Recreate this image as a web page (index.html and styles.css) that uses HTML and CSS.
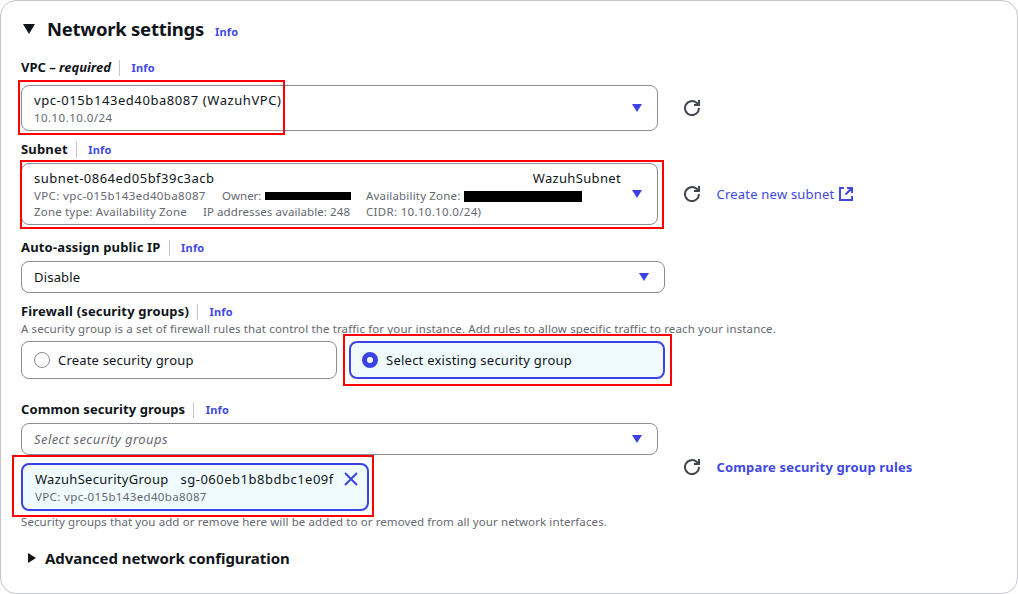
FILE: index.html
```html
<!DOCTYPE html>
<html lang="en">
<head>
<meta charset="utf-8">
<title>Network settings</title>
<link rel="stylesheet" href="styles.css">
</head>
<body>
<main class="panel">
  <header class="panel-header">
    <svg class="caret-title" viewBox="0 0 12 10"><path d="M0 0h12L6 10z"/></svg>
    <h1 class="title">Network settings</h1>
    <a class="info">Info</a>
  </header>

  <section class="field vpc">
    <div class="label"><b class="label-text flat">VPC – <i>required</i></b><a class="info">Info</a></div>
    <div class="row">
      <div class="select vpc-select">
        <div class="lines">
          <div class="value id-long">vpc-015b143ed40ba8087 (WazuhVPC)</div>
          <div class="meta range">10.10.10.0/24</div>
        </div>
        <svg class="caret" viewBox="0 0 10 8"><path d="M0 0h10L5 8z"/></svg>
      </div>
      <svg class="refresh" viewBox="0 0 16 16"><path d="M15 8A7 7 0 1 1 12.800 3L15 5M15 0v5h-5"/></svg>
    </div>
    <div class="mark mark-vpc"></div>
  </section>

  <section class="field subnet">
    <div class="label"><b class="label-text">Subnet</b><a class="info">Info</a></div>
    <div class="row">
      <div class="select subnet-select">
        <div class="lines">
          <div class="value split"><span class="subnet-id">subnet-0864ed05bf39c3acb</span><span class="subnet-name">WazuhSubnet</span></div>
          <div class="meta cols"><span class="vpc-id">VPC: vpc-015b143ed40ba8087</span><span class="owner">Owner:<span class="redact redact-owner"></span></span><span class="zone">Availability Zone:<span class="redact redact-zone"></span></span></div>
          <div class="meta cols"><span class="zone-type">Zone type: Availability Zone</span><span class="ips">IP addresses available: 248</span><span class="cidr">CIDR: 10.10.10.0/24)</span></div>
        </div>
        <svg class="caret" viewBox="0 0 10 8"><path d="M0 0h10L5 8z"/></svg>
      </div>
      <svg class="refresh" viewBox="0 0 16 16"><path d="M15 8A7 7 0 1 1 12.800 3L15 5M15 0v5h-5"/></svg>
      <a class="link">Create new subnet<svg class="external" viewBox="0 0 14 14"><path d="M5 1H1v12h12V9M8 1h5v5M13 1L6.500 7.500"/></svg></a>
    </div>
    <div class="mark mark-subnet"></div>
  </section>

  <section class="field public-ip">
    <div class="label"><b class="label-text">Auto-assign public IP</b><a class="info">Info</a></div>
    <div class="select wide"><span class="option">Disable</span><svg class="caret" viewBox="0 0 10 8"><path d="M0 0h10L5 8z"/></svg></div>
  </section>

  <section class="field firewall">
    <div class="label"><b class="label-text">Firewall (security groups)</b><a class="info">Info</a></div>
    <p class="hint">A security group is a set of firewall rules that control the traffic for your instance. Add rules to allow specific traffic to reach your instance.</p>
    <div class="tiles">
      <div class="tile"><span class="radio"></span><span class="option">Create security group</span></div>
      <div class="tile selected"><span class="radio"></span><span class="option chosen">Select existing security group</span></div>
    </div>
    <div class="mark mark-tile"></div>
  </section>

  <section class="field groups">
    <div class="label"><b class="label-text tight">Common security groups</b><a class="info">Info</a></div>
    <div class="row">
      <div class="stack">
        <div class="select"><i class="placeholder">Select security groups</i><svg class="caret" viewBox="0 0 10 8"><path d="M0 0h10L5 8z"/></svg></div>
        <div class="token">
          <div class="token-line"><span class="group-name">WazuhSecurityGroup</span><span class="group-id">sg-060eb1b8bdbc1e09f</span><svg class="close" viewBox="0 0 14 14"><path d="M1 1l12 12M13 1L1 13"/></svg></div>
          <div class="meta"><span class="vpc-id">VPC: vpc-015b143ed40ba8087</span></div>
        </div>
      </div>
      <svg class="refresh" viewBox="0 0 16 16"><path d="M15 8A7 7 0 1 1 12.800 3L15 5M15 0v5h-5"/></svg>
      <a class="link bold">Compare security group rules</a>
    </div>
    <p class="hint">Security groups that you add or remove here will be added to or removed from all your network interfaces.</p>
    <div class="mark mark-token"></div>
  </section>

  <div class="advanced"><svg class="caret-side" viewBox="0 0 8 10"><path d="M0 0l8 5-8 5z"/></svg><h2>Advanced network configuration</h2></div>
</main>
</body>
</html>
```
FILE: styles.css
```css
* { box-sizing: border-box; }
body { margin: 0; background: #fff; color: #0f141a; font: 13px/18px "Noto Sans", sans-serif; white-space: nowrap; }
h1, h2, p { margin: 0; }
svg { display: block; flex: none; }
.panel { width: 1018px; height: 594px; border: 1px solid #c6c6cd; border-radius: 16px; padding: 13px 20px 0; }
.panel-header { display: flex; align-items: center; height: 30px; }
.caret-title { width: 12px; height: 10px; margin: 0 12px 0 2px; fill: #0f141a; }
.title { font-size: 18.5px; line-height: 30px; letter-spacing: -0.25px; width: 156px; margin-right: 12px; }
.info { color: #4148e5; font-size: 11px; font-weight: 700; line-height: 16px; letter-spacing: 0.2px; }
.panel-header .info { padding-top: 5px; }
.field { position: relative; }
.label { display: flex; align-items: center; height: 16px; line-height: 16px; }
.label-text { letter-spacing: 0.168px; margin-top: -2px; }
.label-text.flat { letter-spacing: -0.02px; }
.label-text.tight { letter-spacing: 0.08px; }
.label .info { border-left: 1px solid #c6c6cd; margin-left: 8px; padding-left: 11.5px; height: 16px; }
.row { display: flex; align-items: center; }
.select { display: flex; align-items: center; justify-content: space-between; width: 637px; height: 32px; padding: 0 15px 0 12px; border: 1px solid #8c8c94; border-radius: 8px; background: #fff; }
.select.wide { width: 644px; }
.caret { width: 10px; height: 8px; fill: #3b43e6; }
.refresh { width: 16px; height: 16px; margin-left: 26px; fill: none; stroke: #424650; stroke-width: 2; }
.meta { color: #656871; font-size: 11.5px; line-height: 16px; position: relative; top: 1px; }
.id-long { letter-spacing: 0.57px; }
.range { letter-spacing: 0.45px; }
.vpc { margin-top: 16px; }
.vpc .row { margin-top: 9px; }
.vpc-select { height: 46px; }
.subnet { margin-top: 11px; }
.subnet .row { margin-top: 5px; }
.subnet-select { height: 62px; }
.lines { width: 587px; margin-right: 1px; }
.split { display: flex; justify-content: space-between; }
.subnet-id { letter-spacing: 0.48px; }
.subnet-name { letter-spacing: 0.34px; }
.cols { display: grid; grid-template-columns: 169px 19px 144px 1fr; }
.vpc-id { letter-spacing: 0.36px; }
.zone-type { grid-column: 1; letter-spacing: 0.18px; }
.owner, .zone { display: flex; align-items: center; }
.owner { grid-column: 2 / 4; padding-left: 19px; }
.zone { grid-column: 4; letter-spacing: 0.18px; }
.redact { background: #000; margin-left: 4px; }
.redact-owner { width: 86px; height: 8px; }
.redact-zone { width: 118px; height: 11px; }
.ips { grid-column: 2 / 4; letter-spacing: 0.08px; }
.cidr { grid-column: 4; letter-spacing: 0.32px; }
.link { display: flex; align-items: center; margin-left: 16.5px; color: #4148e5; letter-spacing: 0.213px; }
.link.bold { font-weight: 700; letter-spacing: 0.15px; }
.external { width: 14px; height: 14px; margin-left: 4.5px; fill: none; stroke: #4148e5; stroke-width: 2; }
.public-ip { margin-top: 15px; }
.public-ip .select { margin-top: 5px; }
.firewall { margin-top: 11px; }
.option { letter-spacing: 0.19px; }
.option.chosen { letter-spacing: 0.243px; }
.hint { color: #656871; font-size: 11.5px; line-height: 16px; letter-spacing: 0.125px; }
.firewall .hint { position: relative; top: 1px; }
.tiles { display: flex; gap: 12px; margin-top: 5px; }
.tile { display: flex; align-items: center; width: 316px; height: 38px; padding: 0 12px; border: 1px solid #8c8c94; border-radius: 8px; }
.tile.selected { border: 2px solid #3b43e6; background: #f0fbff; padding: 0 11px; }
.radio { width: 16px; height: 16px; border: 1px solid #8c8c94; border-radius: 50%; margin-right: 8px; background: #fff; }
.selected .radio { border: 5px solid #3b43e6; }
.groups { margin-top: 23px; }
.groups .row { margin-top: 5px; }
.placeholder { color: #656871; letter-spacing: 0.421px; }
.token { width: 348px; height: 48px; margin-top: 8px; padding: 5px 10px 0 12px; border: 2px solid #3b43e6; border-radius: 8px; background: #f0fbff; }
.token-line { display: flex; align-items: center; }
.group-name { letter-spacing: 0.274px; margin-right: 12px; }
.group-id { letter-spacing: 0.5px; margin-right: 10px; }
.close { width: 14px; height: 14px; fill: none; stroke: #3b43e6; stroke-width: 2; }
.groups .hint { margin-top: 3px; letter-spacing: 0.1px; }
.advanced { display: flex; align-items: center; margin-top: 16px; padding-left: 7px; height: 24px; }
.caret-side { width: 8px; height: 10px; fill: #0f141a; margin-right: 9px; }
h2 { font-size: 15px; line-height: 24px; letter-spacing: -0.06px; }
.mark { position: absolute; border: 2px solid #f00; pointer-events: none; }
.mark-vpc { left: -3px; top: 20px; width: 267px; height: 55px; }
.mark-subnet { left: -1px; top: 18px; width: 644px; height: 69px; }
.mark-tile { left: 322px; top: 30px; width: 329px; height: 52px; }
.mark-token { left: -9px; top: 53px; width: 362px; height: 62px; }
```
